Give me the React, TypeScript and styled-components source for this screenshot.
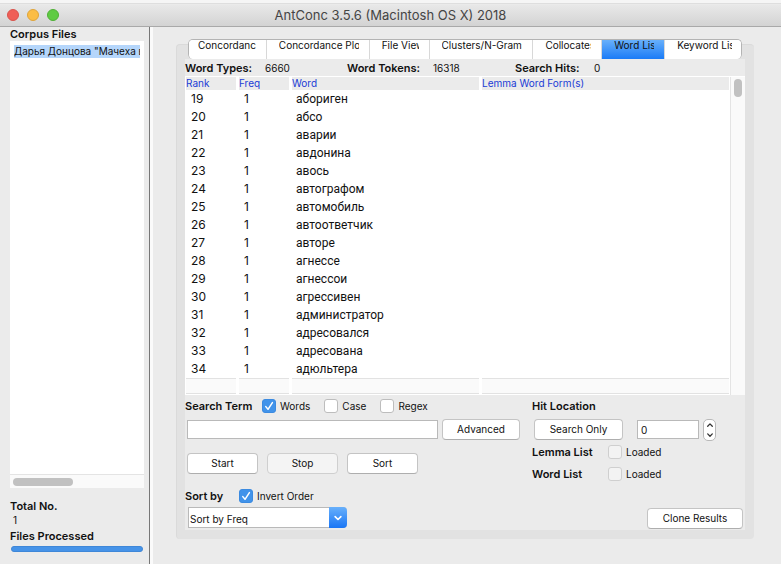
import React, { useState } from "react";
import styled, { createGlobalStyle } from "styled-components";

const GlobalStyle = createGlobalStyle`
  * { box-sizing: border-box; }
  body {
    margin: 0;
    background: #ebebeb;
    color: #111;
    font-family: Inter, "Noto Sans", sans-serif;
    font-size: 10px;
    line-height: 14px;
  }
  button, input, select { font: inherit; color: inherit; margin: 0; }
`;

const Window = styled.div`
  display: flex;
  flex-direction: column;
  min-height: 100vh;
`;

const TitleBar = styled.header`
  display: grid;
  grid-template-columns: 1fr auto 1fr;
  align-items: center;
  height: 27px;
  padding: 4px 7px 0;
  background: linear-gradient(#f5f5f5 3px, #d0d0d0 3px, #ececec 4px, #e8e8e8 5px, #d3d3d3 100%);
  border-bottom: 1px solid #a9a9a9;
`;

const Lights = styled.div`
  display: flex;
  gap: 8px;
`;

const Light = styled.button<{ $fill: string; $edge: string }>`
  width: 12px;
  height: 12px;
  padding: 0;
  border-radius: 50%;
  background: ${(p) => p.$fill};
  border: 1px solid ${(p) => p.$edge};
`;

const Title = styled.h1`
  margin: 0;
  font-size: 13px;
  font-weight: 400;
  line-height: 18px;
  color: #454545;
`;

const Body = styled.div`
  flex: 1;
  display: flex;
`;

const Sidebar = styled.aside`
  display: flex;
  flex-direction: column;
  flex: 0 0 149px;
  min-width: 0;
  padding: 0 5px 12px 10px;
`;

const Heading = styled.h2`
  margin: 0;
  font-size: 11px;
  line-height: 14px;
  font-weight: 600;
  white-space: nowrap;
`;

const FileList = styled.ul`
  flex: 1;
  display: flex;
  flex-direction: column;
  margin: 0;
  padding: 4px 4px 0;
  background: #fff;
  list-style: none;
`;

const FileItem = styled.li`
  height: 13px;
  line-height: 13px;
  background: #b5d6fb;
  white-space: nowrap;
  overflow: hidden;
`;

const HorizontalTrack = styled.div`
  height: 14px;
  padding: 3px;
  margin-bottom: 11px;
  background: #fafafa;
  border-top: 1px solid #e4e4e4;
`;

const HorizontalThumb = styled.div`
  width: 47%;
  height: 8px;
  border-radius: 4px;
  background: #c1c1c1;
`;

const FileCount = styled.div`
  padding-left: 3px;
  line-height: 14px;
  padding-bottom: 2px;
`;

const Progress = styled.progress`
  appearance: none;
  width: 100%;
  height: 6px;
  margin-top: 3px;
  padding: 0 1px;
  border: 0;
  &::-webkit-progress-bar { background: #d8d8d8; border-radius: 3px; }
  &::-webkit-progress-value { background: #4693e8; border-radius: 3px; border: 1px solid #3f87d8; }
`;

const Divider = styled.div`
  flex: 0 0 4px;
  background: #fafafa;
  border-left: 1px solid #777;
`;

const Main = styled.main`
  flex: 1;
  min-width: 0;
  padding: 17px 27px 24px 23px;
`;

const Frame = styled.section`
  padding: 0 9px 9px 8px;
  background: #e2e2e2;
  border: 1px solid #dadada;
  border-width: 1px 0 0 1px;
  border-radius: 4px;
`;

const Tabs = styled.div`
  display: grid;
  grid-template-columns: 78fr 103fr 60fr 104fr 69fr 63fr 76fr;
  height: 20px;
  margin: -6px 3px 0;
  background: #fff;
  border: 1px solid #b4b4b4;
  border-bottom: 0;
  border-radius: 5px;
  overflow: hidden;
`;

const Tab = styled.button<{ $active: boolean }>`
  min-width: 0;
  padding: 0 10px 8px 12px;
  border: 0;
  border-right: 1px solid #d8d8d8;
  background: ${(p) => (p.$active ? "linear-gradient(#68b0fb, #1a7bf7)" : "#fff")};
  &:last-child { border-right: 0; padding-right: 9px; }
  &:first-child { padding-left: 9px; }
`;

const TabLabel = styled.span`
  display: block;
  height: 11px;
  line-height: 11px;
  text-align: left;
  white-space: nowrap;
  overflow: hidden;
`;

const Panel = styled.div`
  background: #ebebeb;
`;

const Stats = styled.dl`
  display: grid;
  grid-template-columns: 80fr 82fr 86fr 82fr 79fr 151fr;
  height: 17px;
  margin: 0;
  line-height: 17px;
  align-items: center;
`;

const StatName = styled.dt`
  font-size: 11px;
  font-weight: 600;
  padding-top: 1px;
  white-space: nowrap;
`;

const StatValue = styled.dd`
  margin: 0;
`;

const TableArea = styled.div`
  display: flex;
  padding-top: 1px;
  background: #fff;
`;

const WordTable = styled.table`
  flex: 1;
  width: 100%;
  margin: 0 1px;
  table-layout: fixed;
  border-collapse: separate;
  border-spacing: 0;
`;

const Col = styled.col<{ $width?: string }>`
  width: ${(p) => p.$width ?? "auto"};
`;

const HeadCell = styled.th`
  height: 13px;
  padding: 0;
  line-height: 13px;
  font-weight: 400;
  text-align: left;
  color: #1a3bd6;
  background: #ebebeb;
  border-right: 3px solid #fff;
  &:last-child { border-right: 0; }
`;

const Cell = styled.td`
  height: 18px;
  padding: 0 5px;
  font-size: 12px;
  line-height: 18px;
`;

const WordCell = styled(Cell)`
  padding: 0 4px;
  font-family: Roboto, "Noto Sans", sans-serif;
`;

const FootCell = styled.td`
  height: 17px;
  padding: 0;
  background: linear-gradient(#e2e2e2 1px, #fafafa 1px, #fafafa 15px, #e2e2e2 15px, #e2e2e2 16px, #fff 16px);
  border-right: 3px solid #fff;
  &:last-child { border-right: 0; }
`;

const VerticalTrack = styled.div`
  flex: 0 0 15px;
  padding: 2px 3px;
  background: #fafafa;
  border-left: 1px solid #e4e4e4;
`;

const VerticalThumb = styled.div`
  height: 18px;
  width: 8px;
  border-radius: 4px;
  background: #c1c1c1;
`;

const Controls = styled.div`
  display: grid;
  grid-template-columns: 347fr 213fr;
  padding: 3px 0 1px;
`;

const Column = styled.div`
  display: flex;
  flex-direction: column;
  min-width: 0;
`;

const Row = styled.div<{ $gap?: number; $height: number; $top?: number; $indent?: number; $end?: number }>`
  display: flex;
  align-items: center;
  gap: ${(p) => p.$gap ?? 0}px;
  height: ${(p) => p.$height}px;
  margin-top: ${(p) => p.$top ?? 0}px;
  padding-left: ${(p) => p.$indent ?? 0}px;
  padding-right: ${(p) => p.$end ?? 0}px;
`;

const RowHeading = styled(Heading)<{ $width: number }>`
  flex: 0 0 ${(p) => p.$width}px;
  min-width: 0;
`;

const CheckLabel = styled.label`
  display: flex;
  align-items: center;
  gap: 4px;
`;

const CheckStack = styled.span`
  display: grid;
  & > * { grid-area: 1 / 1; }
`;

const CheckInput = styled.input`
  appearance: none;
  width: 14px;
  height: 14px;
  border: 1px solid #bdbdbd;
  border-radius: 3px;
  background: #fff;
  &:checked { background: #4193ea; border-color: #3b8ae0; }
  &:disabled { background: #f3f3f3; border-color: #cfcfcf; }
`;

const CheckMark = styled.svg`
  width: 14px;
  height: 14px;
  pointer-events: none;
`;

const Button = styled.button<{ $width: number }>`
  flex: 0 0 ${(p) => p.$width}px;
  height: 21px;
  padding: 0 0 2px;
  border: 1px solid #c4c4c4;
  border-bottom-color: #aeaeae;
  border-radius: 4px;
  background: #fff;
  &:disabled { background: #f4f4f4; border-color: #cfcfcf; color: #111; }
`;

const TextField = styled.input`
  flex: 1;
  min-width: 0;
  height: 19px;
  padding: 0 3px;
  border: 1px solid #b9b9b9;
  border-radius: 0;
  background: #fff;
`;

const NumberGroup = styled.div`
  display: flex;
  align-items: center;
  gap: 4px;
`;

const NumberField = styled(TextField)`
  flex: 0 0 62px;
  width: 62px;
`;

const Spinner = styled.div`
  display: flex;
  flex-direction: column;
  width: 13px;
  height: 22px;
  border: 1px solid #b9b9b9;
  border-radius: 5px;
  background: #fff;
`;

const SpinButton = styled.button`
  flex: 1;
  display: grid;
  place-items: center;
  padding: 0;
  border: 0;
  background: none;
`;

const Combo = styled.div`
  display: grid;
  grid-template-columns: 1fr 18px;
  width: 159px;
  height: 21px;
  border: 1px solid #b9b9b9;
  border-right: 0;
  border-radius: 0 4px 4px 0;
  background: #fff;
`;

const ComboSelect = styled.select`
  grid-area: 1 / 1 / 2 / 3;
  appearance: none;
  padding: 3px 20px 0 1px;
  border: 0;
  background: none;
`;

const ComboArrow = styled.span`
  grid-area: 1 / 2;
  display: grid;
  place-items: center;
  margin: -1px 0;
  border-radius: 0 4px 4px 0;
  background: linear-gradient(#68b0fb, #1a76f5);
  pointer-events: none;
`;

const CloneRow = styled.div`
  display: flex;
  justify-content: flex-end;
  margin-top: auto;
  padding-right: 2px;
`;

const tabs = [
  "Concordance",
  "Concordance Plot",
  "File View",
  "Clusters/N-Grams",
  "Collocates",
  "Word List",
  "Keyword List",
];

const words = [
  "абориген", "абсо", "аварии", "авдонина", "авось", "автографом", "автомобиль", "автоответчик",
  "авторе", "агнессе", "агнессои", "агрессивен", "администратор", "адресовался", "адресована", "адюльтера",
];

function Check({ label, checked = false, disabled = false }: { label: string; checked?: boolean; disabled?: boolean }) {
  const [on, setOn] = useState(checked);
  return (
    <CheckLabel>
      <CheckStack>
        <CheckInput type="checkbox" checked={on} disabled={disabled} onChange={() => setOn(!on)} />
        {on && (
          <CheckMark viewBox="0 0 14 14" fill="none" stroke="#fff" strokeWidth="1.5" strokeLinecap="round" strokeLinejoin="round">
            <path d="M3.8 7.6 6 10.3 10.4 3.6" />
          </CheckMark>
        )}
      </CheckStack>
      {label}
    </CheckLabel>
  );
}

function Chevron({ up = false, color, size }: { up?: boolean; color: string; size: number }) {
  return (
    <svg width={size} height={size} viewBox="0 0 8 8" fill="none" stroke={color} strokeWidth="1.3" strokeLinecap="round" strokeLinejoin="round">
      <path d={up ? "M1.7 5.2 4 2.9 6.3 5.2" : "M1.7 2.9 4 5.2 6.3 2.9"} />
    </svg>
  );
}

export default function App() {
  const [active, setActive] = useState("Word List");
  const [term, setTerm] = useState("");
  const [hit, setHit] = useState(0);

  return (
    <Window>
      <GlobalStyle />
      <TitleBar>
        <Lights>
          <Light $fill="#ef5f57" $edge="#d9534c" aria-label="Close" />
          <Light $fill="#fbbd45" $edge="#dfa43a" aria-label="Minimize" />
          <Light $fill="#5fcb43" $edge="#4fb036" aria-label="Zoom" />
        </Lights>
        <Title>AntConc 3.5.6 (Macintosh OS X) 2018</Title>
      </TitleBar>
      <Body>
        <Sidebar>
          <Heading>Corpus Files</Heading>
          <FileList>
            <FileItem>Дарья Донцова "Мачеха в хрустальных галошах"</FileItem>
          </FileList>
          <HorizontalTrack>
            <HorizontalThumb />
          </HorizontalTrack>
          <Heading>Total No.</Heading>
          <FileCount>1</FileCount>
          <Heading id="processed">Files Processed</Heading>
          <Progress value={1} max={1} aria-labelledby="processed" />
        </Sidebar>
        <Divider />
        <Main>
          <Frame>
            <Tabs role="tablist">
              {tabs.map((label) => (
                <Tab
                  key={label}
                  role="tab"
                  aria-selected={label === active}
                  $active={label === active}
                  onClick={() => setActive(label)}
                >
                  <TabLabel>{label}</TabLabel>
                </Tab>
              ))}
            </Tabs>
            <Panel>
              <Stats>
                <StatName>Word Types:</StatName>
                <StatValue>6660</StatValue>
                <StatName>Word Tokens:</StatName>
                <StatValue>16318</StatValue>
                <StatName>Search Hits:</StatName>
                <StatValue>0</StatValue>
              </Stats>
              <TableArea>
                <WordTable>
                  <colgroup>
                    <Col $width="53px" />
                    <Col $width="53px" />
                    <Col $width="35%" />
                    <Col />
                  </colgroup>
                  <thead>
                    <tr>
                      <HeadCell>Rank</HeadCell>
                      <HeadCell>Freq</HeadCell>
                      <HeadCell>Word</HeadCell>
                      <HeadCell>Lemma Word Form(s)</HeadCell>
                    </tr>
                  </thead>
                  <tbody>
                    {words.map((word, i) => (
                      <tr key={word}>
                        <Cell>{i + 19}</Cell>
                        <Cell>1</Cell>
                        <WordCell>{word}</WordCell>
                        <Cell />
                      </tr>
                    ))}
                  </tbody>
                  <tfoot>
                    <tr>
                      <FootCell />
                      <FootCell />
                      <FootCell />
                      <FootCell />
                    </tr>
                  </tfoot>
                </WordTable>
                <VerticalTrack>
                  <VerticalThumb />
                </VerticalTrack>
              </TableArea>
              <Controls>
                <Column>
                  <Row $gap={14} $height={16}>
                    <RowHeading $width={63}>Search Term</RowHeading>
                    <Check label="Words" checked />
                    <Check label="Case" />
                    <Check label="Regex" />
                  </Row>
                  <Row $gap={4} $height={21} $top={5} $indent={2} $end={12}>
                    <TextField aria-label="Search Term" value={term} onChange={(e) => setTerm(e.target.value)} />
                    <Button $width={78}>Advanced</Button>
                  </Row>
                  <Row $gap={9} $height={21} $top={13} $indent={2}>
                    <Button $width={71}>Start</Button>
                    <Button $width={71} disabled>Stop</Button>
                    <Button $width={71}>Sort</Button>
                  </Row>
                  <Row $gap={14} $height={16} $top={14}>
                    <RowHeading $width={40}>Sort by</RowHeading>
                    <Check label="Invert Order" checked />
                  </Row>
                  <Row $height={23} $top={2} $indent={3}>
                    <Combo>
                      <ComboSelect aria-label="Sort by" defaultValue="freq">
                        <option value="freq">Sort by Freq</option>
                        <option value="word">Sort by Word</option>
                        <option value="end">Sort by Word End</option>
                      </ComboSelect>
                      <ComboArrow>
                        <Chevron color="#fff" size={10} />
                      </ComboArrow>
                    </Combo>
                  </Row>
                </Column>
                <Column>
                  <Row $height={16}>
                    <Heading>Hit Location</Heading>
                  </Row>
                  <Row $gap={14} $height={21} $top={5} $indent={2}>
                    <Button $width={89}>Search Only</Button>
                    <NumberGroup>
                      <NumberField aria-label="Hit Location" value={hit} onChange={(e) => setHit(Number(e.target.value) || 0)} />
                      <Spinner>
                        <SpinButton aria-label="Increase" onClick={() => setHit(hit + 1)}>
                          <Chevron up color="#333" size={8} />
                        </SpinButton>
                        <SpinButton aria-label="Decrease" onClick={() => setHit(Math.max(0, hit - 1))}>
                          <Chevron color="#333" size={8} />
                        </SpinButton>
                      </Spinner>
                    </NumberGroup>
                  </Row>
                  <Row $gap={12} $height={16} $top={4}>
                    <RowHeading $width={64}>Lemma List</RowHeading>
                    <Check label="Loaded" disabled />
                  </Row>
                  <Row $gap={12} $height={16} $top={6}>
                    <RowHeading $width={64}>Word List</RowHeading>
                    <Check label="Loaded" disabled />
                  </Row>
                  <CloneRow>
                    <Button $width={96}>Clone Results</Button>
                  </CloneRow>
                </Column>
              </Controls>
            </Panel>
          </Frame>
        </Main>
      </Body>
    </Window>
  );
}
